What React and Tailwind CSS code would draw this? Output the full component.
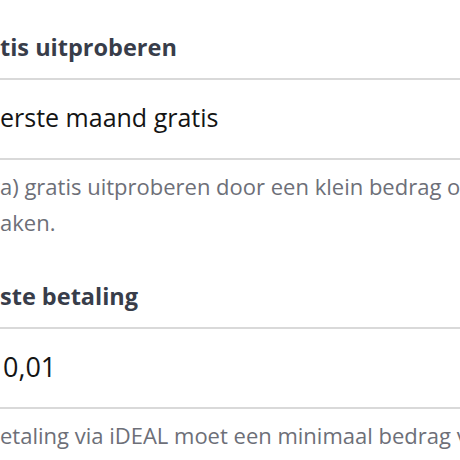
function Cut({ children }) {
  // hidden start of a line that runs off the left edge of the view
  return <span className="inline-flex w-0 justify-end whitespace-pre">{children}</span>;
}

function Section({ title, cut, value, valueCut, lines }) {
  return (
    <section className="pb-[41px]">
      <h3 className="text-[23.5px] font-bold leading-[30px] text-[#383d4a] whitespace-nowrap">
        <Cut>{cut}</Cut>
        {title}
      </h3>
      <div className="mt-[16px] h-[82px] pb-[2px] flex items-center border-y-2 border-[#d9d9d9] text-[25px] text-[#141414] whitespace-nowrap">
        <span>
          <Cut>{valueCut}</Cut>
          {value}
        </span>
      </div>
      <div className="mt-[8px] text-[22px] leading-[36px] text-[#6d6f78] whitespace-nowrap">
        {lines.map((l, i) => (
          <p key={i}>
            <Cut>{l[0]}</Cut>
            {l[1]}
          </p>
        ))}
      </div>
    </section>
  );
}

export default function App() {
  return (
    <div className="w-[460px] h-[460px] overflow-hidden bg-white font-['Open_Sans',sans-serif]">
      <div className="pt-[32px]">
        <Section
          cut="Gra"
          title="tis uitproberen"
          valueCut="E"
          value="erste maand gratis"
          lines={[
            ['Laat klanten je abonnement (een maand of week extr', 'a) gratis uitproberen door een klein bedrag of niets te rekenen'],
            ['te m', 'aken.'],
          ]}
        />
        <Section
          cut="Eer"
          title="ste betaling"
          valueCut="€ "
          value={<span className="ml-[3px] text-[27px]">0,01</span>}
          lines={[['De eerste b', 'etaling via iDEAL moet een minimaal bedrag van € 0,01 zijn.']]}
        />
      </div>
    </div>
  );
}
